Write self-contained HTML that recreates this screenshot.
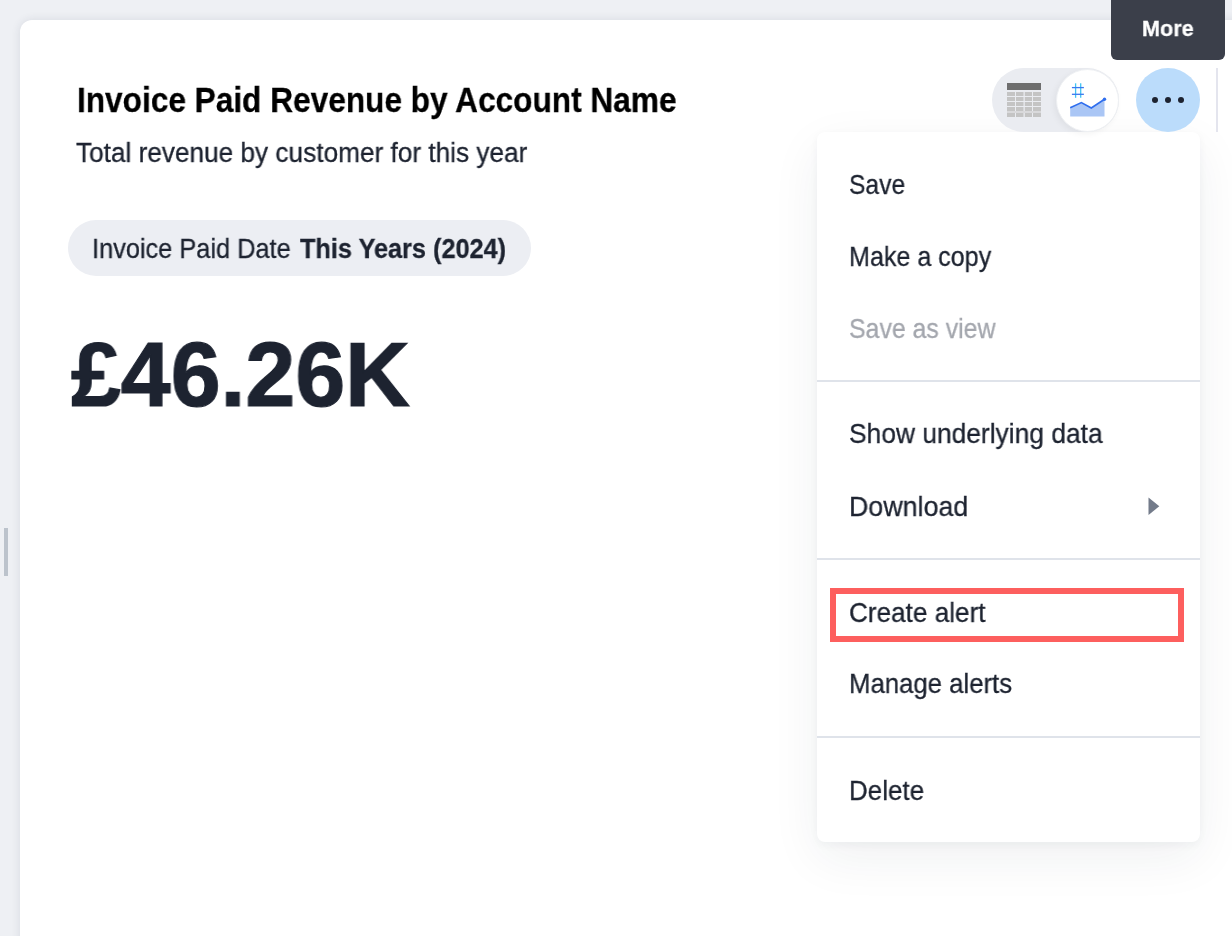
<!DOCTYPE html>
<html>
<head>
<meta charset="utf-8">
<style>
html,body{margin:0;padding:0;}
body{width:1232px;height:936px;overflow:hidden;background:#eef0f4;position:relative;font-family:"Liberation Sans",sans-serif;}
.abs{position:absolute;}
#card{position:absolute;left:20px;top:20px;width:1250px;height:960px;background:#fff;border-radius:12px;box-shadow:0 0 10px rgba(40,50,70,0.11);}
#handle{position:absolute;left:4px;top:528px;width:4px;height:48px;background:#bcc3cc;}
.t{position:absolute;white-space:nowrap;line-height:1;transform-origin:0 0;will-change:transform;-webkit-text-stroke:0.3px currentColor;}
#title{left:77px;top:82px;font-size:35px;font-weight:bold;color:#000;transform:scaleX(0.903);}
#sub{left:76px;top:140px;font-size:27px;color:#1d2330;transform:scaleX(0.97);}
#chip{position:absolute;left:68px;top:220px;width:463px;height:56px;border-radius:28px;background:#eceef3;}
#chip1{left:92px;top:235px;font-size:27.5px;color:#1d2330;transform:scaleX(0.922);}
#chip2{left:300px;top:235px;font-size:27.5px;font-weight:bold;color:#1d2330;transform:scaleX(0.919);}
#big{left:71px;top:329px;font-size:91px;font-weight:bold;color:#1d2330;-webkit-text-stroke:1.2px #1d2330;transform:scaleX(0.985);}
#tip{position:absolute;left:1111px;top:-10px;width:114px;height:70px;background:#3b3f4a;border-radius:6px;}
#tiptext{left:1142px;top:17.5px;font-size:22px;font-weight:bold;color:#fff;transform:scaleX(0.985);}
#toggle{position:absolute;left:992px;top:68px;width:127px;height:64px;border-radius:32px;background:#eaecf1;}
#circ{position:absolute;left:1056px;top:69px;width:61px;height:61px;border-radius:50%;background:#fff;border:1px solid #eef0f3;box-shadow:-2px 2px 6px rgba(0,0,0,0.05);}
#more{position:absolute;left:1136px;top:68px;width:64px;height:64px;border-radius:50%;background:#bbdcfb;}
.dot{position:absolute;top:97px;width:6px;height:6px;border-radius:50%;background:#1d2330;}
#vsep{position:absolute;left:1216px;top:68px;width:2px;height:64px;background:#e4e5ee;}
#menu{position:absolute;left:817px;top:132px;width:383px;height:710px;background:#fff;border-radius:8px;box-shadow:0 3px 8px rgba(30,40,60,0.045),0 16px 50px rgba(30,40,60,0.065);}
.sep{position:absolute;left:817px;width:383px;height:2px;background:#dfe3ea;}
.mi{position:absolute;left:848.5px;font-size:27.5px;color:#1d2330;white-space:nowrap;line-height:1;transform-origin:0 0;will-change:transform;-webkit-text-stroke:0.3px currentColor;}
#redbox{position:absolute;left:830px;top:588px;width:342px;height:42px;border:6px solid #fd5f5e;}
</style>
</head>
<body>
<div id="handle"></div>
<div id="card"></div>
<div id="menu"></div>
<div class="t" id="title">Invoice Paid Revenue by Account Name</div>
<div class="t" id="sub">Total revenue by customer for this year</div>
<div id="chip"></div>
<div class="t" id="chip1">Invoice Paid Date</div>
<div class="t" id="chip2">This Years (2024)</div>
<div class="t" id="big">£46.26K</div>

<div id="toggle"></div>
<svg class="abs" style="left:1007px;top:83px" width="34" height="34" viewBox="0 0 34 34">
  <rect x="0" y="0" width="34" height="7" fill="#6e6e6e"/>
  <g fill="#c4c4c4">
    <rect x="0" y="9" width="8" height="4"/><rect x="9" y="9" width="7.5" height="4"/><rect x="17.8" y="9" width="7.2" height="4"/><rect x="26" y="9" width="8" height="4"/>
    <rect x="0" y="14" width="8" height="4"/><rect x="9" y="14" width="7.5" height="4"/><rect x="17.8" y="14" width="7.2" height="4"/><rect x="26" y="14" width="8" height="4"/>
    <rect x="0" y="19" width="8" height="4"/><rect x="9" y="19" width="7.5" height="4"/><rect x="17.8" y="19" width="7.2" height="4"/><rect x="26" y="19" width="8" height="4"/>
    <rect x="0" y="24" width="8" height="4"/><rect x="9" y="24" width="7.5" height="4"/><rect x="17.8" y="24" width="7.2" height="4"/><rect x="26" y="24" width="8" height="4"/>
    <rect x="0" y="30" width="8" height="4"/><rect x="9" y="30" width="7.5" height="4"/><rect x="17.8" y="30" width="7.2" height="4"/><rect x="26" y="30" width="8" height="4"/>
    <rect x="0" y="28" width="34" height="2" fill="#d9d9db"/>
  </g>
</svg>
<div id="circ"></div>
<svg class="abs" style="left:1060px;top:78px" width="52" height="44" viewBox="1060 78 52 44">
  <polygon points="1070.2,107.7 1081.4,102.6 1091.3,108 1104.5,99.2 1104.5,116.5 1070.2,116.5" fill="#aac6f5"/>
  <polyline points="1070.2,107.7 1081.4,102.6 1091.3,108 1104.5,99.2" fill="none" stroke="#2f6eee" stroke-width="1.7" stroke-linejoin="miter"/>
  <circle cx="1104.5" cy="99.3" r="1.7" fill="#2f6eee"/>
  <line x1="1075.6" y1="83.3" x2="1075.6" y2="97.8" stroke="#40c4f2" stroke-width="1.3"/>
  <line x1="1080.7" y1="83.3" x2="1080.7" y2="97.8" stroke="#40c4f2" stroke-width="1.3"/>
  <line x1="1071.9" y1="87.6" x2="1083.9" y2="87.6" stroke="#3a78f0" stroke-width="1.3"/>
  <line x1="1071.9" y1="94.3" x2="1083.9" y2="94.3" stroke="#3a78f0" stroke-width="1.3"/>
</svg>
<div id="more"></div>
<div class="dot" style="left:1152px"></div>
<div class="dot" style="left:1165px"></div>
<div class="dot" style="left:1178px"></div>
<div id="vsep"></div>
<div id="tip"></div>
<div class="t" id="tiptext">More</div>

<div class="mi" id="m1" style="top:171px;transform:scaleX(0.895)">Save</div>
<div class="mi" id="m2" style="top:243px;transform:scaleX(0.912)">Make a copy</div>
<div class="mi" id="m3" style="top:315px;color:#a4a7ae;transform:scaleX(0.904)">Save as view</div>
<div class="sep" style="top:380px"></div>
<div class="mi" id="m4" style="top:420px;transform:scaleX(0.959)">Show underlying data</div>
<div class="mi" id="m5" style="top:493px;transform:scaleX(0.975)">Download</div>
<svg class="abs" style="left:1146px;top:496px" width="16" height="22" viewBox="0 0 16 22"><polygon points="2.5,1.6 13.3,10.3 2.5,18.9" fill="#737b8a"/></svg>
<div class="sep" style="top:558px"></div>
<div class="mi" id="m6" style="top:599px;transform:scaleX(0.95)">Create alert</div>
<div class="mi" id="m7" style="top:670px;transform:scaleX(0.936)">Manage alerts</div>
<div class="sep" style="top:736px"></div>
<div class="mi" id="m8" style="top:777px;transform:scaleX(0.945)">Delete</div>
<div id="redbox"></div>
</body>
</html>
